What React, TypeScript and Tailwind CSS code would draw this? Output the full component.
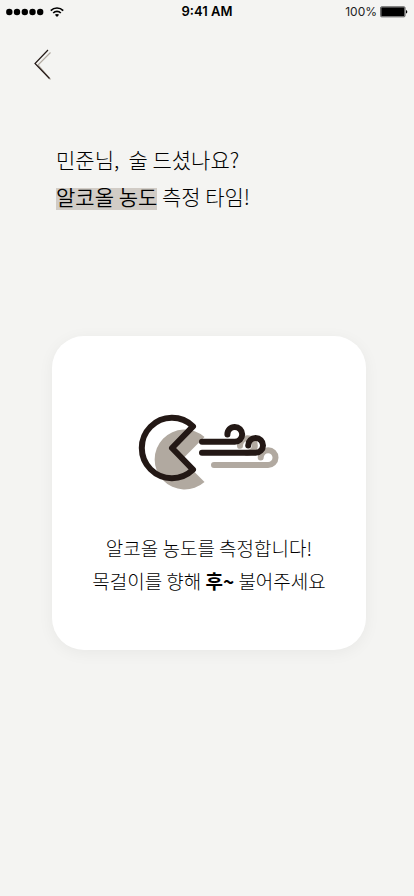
function SignalDots() {
  return (
    <svg width="38" height="8" viewBox="0 0 38 8" aria-hidden="true">
      <circle cx="3.3" cy="4" r="3.2" />
      <circle cx="11" cy="4" r="3.2" />
      <circle cx="18.8" cy="4" r="3.2" />
      <circle cx="26.5" cy="4" r="3.2" />
      <circle cx="34.2" cy="4" r="3.2" />
    </svg>
  );
}

function WifiIcon() {
  return (
    <svg width="14" height="10" viewBox="0 0 14 10" fill="none" stroke="#000" strokeWidth="1.7" aria-hidden="true">
      <path d="M0.8 3.7C4.2 0.1 9.8 0.1 13.2 3.7" />
      <path d="M3.2 6C5.3 3.9 8.7 3.9 10.8 6" />
      <path d="M7 10L4.9 7.8C6.1 6.7 7.9 6.7 9.1 7.8Z" fill="#000" stroke="none" />
    </svg>
  );
}

function BatteryIcon() {
  return (
    <svg width="28" height="12" viewBox="0 0 28 12" aria-hidden="true">
      <rect x="0.5" y="0.7" width="24.6" height="10.2" rx="1.2" fill="#999" stroke="#555" strokeWidth="0.8" />
      <rect x="1.4" y="1.6" width="22.8" height="8.4" rx="0.5" />
      <path d="M26 4C27.8 4.4 27.8 7.2 26 7.6Z" />
    </svg>
  );
}

function BackIcon() {
  return (
    <svg width="20" height="32" viewBox="0 0 20 32" fill="none" strokeWidth="1.2" aria-hidden="true">
      <path d="M18.5 4.5L6 17L18.5 31.5" stroke="#b1a9a0" />
      <path d="M16 2L3 15.5L17.5 30.5" stroke="#231815" />
    </svg>
  );
}

function BlowIcon() {
  return (
    <svg width="160" height="100" viewBox="0 0 160 100" fill="none" strokeLinecap="round" strokeLinejoin="round" role="img" aria-label="후 불기">
      <path d="M75.5 37L53 59.5L75.5 82A30 30 0 1 1 75.5 37Z" fill="#b1a9a0" />
      <g stroke="#b1a9a0" strokeWidth="6">
        <path d="M85 65H139A7.4 7.4 0 1 0 131.7 57.6" />
        <path d="M118 53A7.4 7.4 0 1 0 111 45.8" />
      </g>
      <g stroke="#231815" strokeWidth="6">
        <path d="M64 26.3A30.2 30.2 0 1 0 64 69.7L43 48Z" />
        <path d="M73 41.7H105.7A7.4 7.4 0 1 0 98.4 34.5" />
        <path d="M73 52.8H126.5A7.4 7.4 0 1 0 119.2 45.5" />
      </g>
    </svg>
  );
}

export default function App() {
  return (
    <div className="min-h-screen bg-[#f4f4f2] font-['Noto_Sans_CJK_KR',sans-serif] text-black">
      <header className="grid h-6 grid-cols-3 items-center px-[6px] font-[Inter,sans-serif] text-[13px]">
        <div className="flex items-center gap-[6px]">
          <SignalDots />
          <WifiIcon />
        </div>
        <time className="text-center font-semibold">9:41 AM</time>
        <div className="flex items-center justify-end gap-[3px]">
          <span className="text-xs text-[#222]">100%</span>
          <BatteryIcon />
        </div>
      </header>

      <main>
        <button type="button" aria-label="뒤로" className="mt-6 ml-8 block">
          <BackIcon />
        </button>

        <h1 className="mt-[61px] ml-14 text-[21px] leading-[37px] font-light">
          <span className="block whitespace-pre">민준님,  술 드셨나요?</span>
          <span className="block">
            <mark className="bg-linear-to-b from-[#d1ccc6] to-[#d1ccc6] bg-[length:100%_22px] bg-[position:0_7px] bg-transparent bg-no-repeat font-[350] text-black">
              알코올 농도
            </mark>{" "}
            측정 타임!
          </span>
        </h1>

        <section className="mt-[121px] mr-12 ml-13 flex flex-col items-center rounded-[32px] bg-white pt-16 pb-[53px] shadow-[0_3px_16px_rgba(0,0,0,0.05)]">
          <BlowIcon />
          <p className="mt-[31px] text-center text-[19px] leading-[33px] font-light">
            알코올 농도를 측정합니다!
            <br />
            목걸이를 향해 <strong className="font-bold">후~</strong> 불어주세요
          </p>
        </section>
      </main>
    </div>
  );
}
